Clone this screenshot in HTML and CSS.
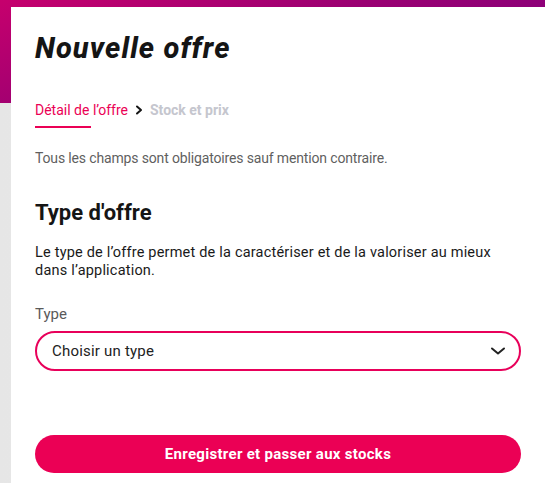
FILE: index.html
```html
<!DOCTYPE html>
<html lang="fr">
<head>
<meta charset="utf-8">
<title>Nouvelle offre</title>
<link rel="stylesheet" href="styles.css">
</head>
<body>
<main class="card">
  <h1 class="title">Nouvelle offre</h1>
  <nav class="steps">
    <span class="step step-active">Détail de l’offre</span>
    <svg class="step-sep" width="10" height="10" viewBox="0 0 10 10" aria-hidden="true"><path d="M3 1.5 L7 5 L3 8.5" fill="none" stroke="#151515" stroke-width="2" stroke-linecap="round" stroke-linejoin="round"/></svg>
    <span class="step step-disabled">Stock et prix</span>
  </nav>
  <p class="mandatory">Tous les champs sont obligatoires sauf mention contraire.</p>
  <h2 class="section-title">Type d'offre</h2>
  <p class="section-desc">Le type de l’offre permet de la caractériser et de la valoriser au mieux dans l’application.</p>
  <label class="field-label">Type</label>
  <div class="select">
    <span class="select-value">Choisir un type</span>
    <svg class="select-chevron" width="16" height="10" viewBox="0 0 16 10" aria-hidden="true"><path d="M2 2.5 L8 7.5 L14 2.5" fill="none" stroke="#222" stroke-width="2" stroke-linecap="round" stroke-linejoin="round"/></svg>
  </div>
  <button class="primary-btn" type="button">Enregistrer et passer aux stocks</button>
</main>
</body>
</html>
```
FILE: styles.css
```css
html, body {
  margin: 0;
  padding: 0;
}
body {
  font-family: Roboto, "Liberation Sans", sans-serif;
  background:
    linear-gradient(160deg, #c6006d 0%, #9a0072 45%, #7a0080 100%) top left / 100% 103px no-repeat,
    linear-gradient(90deg, #e6e6e6, #eeeeee) #ebebeb;
  height: 483px;
  overflow: hidden;
}
.card {
  margin: 7px 0 0 11px;
  background: #fff;
  padding: 24px 24px 10px;
  height: 476px;
  box-sizing: border-box;
  display: flex;
  flex-direction: column;
}
.title {
  margin: 0;
  font-size: 29px;
  line-height: 34px;
  font-weight: 800;
  font-style: italic;
  letter-spacing: 1.1px;
  color: #151515;
}
.steps {
  margin-top: 35px;
  display: flex;
  align-items: center;
  gap: 6px;
  font-size: 14px;
  line-height: 20px;
}
.step-active {
  color: #eb0055;
  position: relative;
  padding-bottom: 8px;
  margin-bottom: -8px;
}
.step-active::after {
  content: "";
  position: absolute;
  left: 0;
  bottom: 0;
  width: 56px;
  height: 2px;
  background: #eb0055;
}
.step-sep {
  display: block;
}
.step-disabled {
  color: #c5c6ce;
  font-weight: 700;
}
.mandatory {
  margin: 28px 0 0;
  font-size: 14px;
  line-height: 20px;
  letter-spacing: -0.15px;
  color: #5f5f5f;
}
.section-title {
  margin: 31px 0 0;
  font-size: 22px;
  line-height: 28px;
  font-weight: 700;
  color: #151515;
}
.section-desc {
  margin: 17px 0 0;
  font-size: 14.5px;
  line-height: 18px;
  letter-spacing: 0.2px;
  color: #1a1a1a;
}
.field-label {
  margin-top: 24px;
  font-size: 15px;
  line-height: 20px;
  color: #5a5a5a;
}
.select {
  margin-top: 7px;
  height: 40px;
  box-sizing: border-box;
  border: 2px solid #e8005a;
  border-radius: 20px;
  display: flex;
  align-items: center;
  justify-content: space-between;
  padding: 0 13px 0 15px;
}
.select-value {
  font-size: 15px;
  letter-spacing: 0.2px;
  color: #222;
}
.select-chevron {
  display: block;
}
.primary-btn {
  margin-top: 64px;
  height: 39px;
  border: none;
  border-radius: 20px;
  background: #eb0055;
  color: #fff;
  font-family: Roboto, "Liberation Sans", sans-serif;
  font-size: 15px;
  font-weight: 700;
  letter-spacing: 0.3px;
  cursor: pointer;
}
```
